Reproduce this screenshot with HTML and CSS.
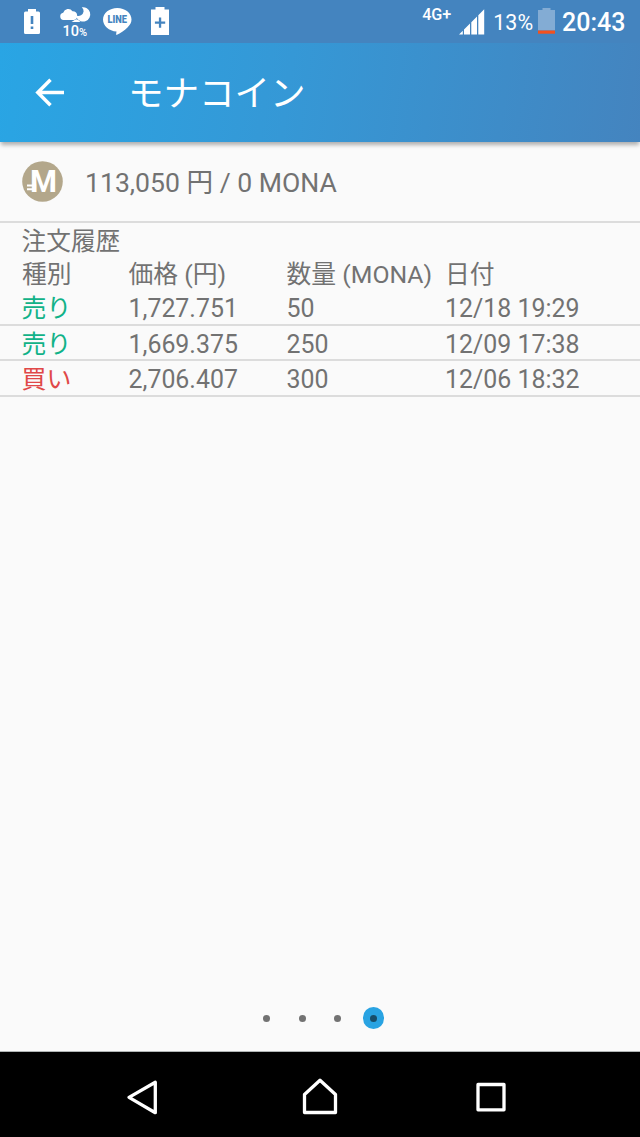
FILE: index.html
```html
<!DOCTYPE html>
<html lang="ja">
<head>
    <meta charset="UTF-8">
    <meta name="viewport" content="width=device-width, initial-scale=1.0">
    <title>モナコイン</title>
    <link rel="stylesheet" href="styles.css">
</head>
<body>
    <!-- ステータスバー -->
    <div class="status-bar">
        <svg class="status-icons" width="200" height="43" viewBox="0 0 200 43">
            <path fill="#fff" d="M28 9h8v2.500h2.500q1.500 0 1.500 1.500v19.500q0 1.500-1.500 1.500h-13q-1.500 0-1.500-1.500V13q0-1.500 1.500-1.500H28z"/>
            <path fill="#4484bf" d="M30.700 16h2.600v8h-2.600zM30.700 26.500h2.600v2.600h-2.600z"/>
            <path fill="#fff" d="M63.500 20a3.700 3.700 0 0 1-.3-7.300 5.300 5.300 0 0 1 9.300-1.500 4.500 4.500 0 0 1 1.500 8.800z"/>
            <path fill="#fff" d="M81.800 7.300A7.200 7.200 0 1 1 76.800 18L76.500 15.800A5.400 5.400 0 0 0 83.600 11.600Q83.800 9 81.800 7.300z"/>
            <path fill="#fff" d="M71.500 22l3.200-1.900 1.800-.9 1.800.9 2.200 1.900z"/>
            <text class="rain" x="62.500" y="35.700">10<tspan class="rain-unit">%</tspan></text>
            <path fill="#fff" d="M117.300 8c7.800 0 14.200 5.100 14.200 11.500 0 3-1.500 5.500-4 8-3 3-7.500 6-10.500 7.300-.8.300-1-.2-.8-1l.3-2.300c-7.500-.4-13.500-5.600-13.500-12C103 13.100 109.500 8 117.300 8z"/>
            <text class="line" x="107.500" y="23.200" textLength="19.500" lengthAdjust="spacingAndGlyphs">LINE</text>
            <path fill="#fff" d="M155.500 7h9v2.500h4.500V35h-18V9.500h4.500z"/>
            <path fill="#4484bf" d="M158.900 17.500h2.300v4h4v2.300h-4v4h-2.300v-4h-4v-2.300h4z"/>
        </svg>
        <div class="status-right">
            <span class="network">4G+</span>
            <svg class="signal" width="26" height="43" viewBox="0 0 26 43">
                <path fill="#fff" d="M0 34.500l3.800-3.800v3.800zM5 34.500v-5l6-6v11zM12.300 34.500V22.200l5.700-5.700v18zM19.300 34.500V15.200l5.900-5.900v25.200z"/>
            </svg>
            <span class="percent">13%</span>
            <svg class="battery" width="18" height="43" viewBox="0 0 18 43">
                <path fill="#83acd4" d="M4.500 8h8v2h4.500v20.500H0V10h4.500z"/>
                <path fill="#f4511e" d="M0 30.500h17v3.200H0z"/>
            </svg>
            <span class="clock">20:43</span>
        </div>
    </div>

    <!-- ヘッダー -->
    <div class="header">
        <svg class="back" width="30" height="30" viewBox="0 0 30 30">
            <path fill="none" stroke="#fff" stroke-width="3.500" d="M29 14.500H3M15.500 1.800L2.800 14.500l12.700 12.700"/>
        </svg>
        <h1>モナコイン</h1>
    </div>

    <!-- 残高 -->
    <div class="balance">
        <svg width="41" height="41" viewBox="0 0 41 41">
            <circle cx="20.500" cy="20.500" r="20.300" fill="#b3a78b"/>
            <text class="coin" x="8" y="31" textLength="27" lengthAdjust="spacingAndGlyphs">M</text>
            <path stroke="#fff" stroke-width="1.900" d="M5 24.500h8M5 28.200h8"/>
        </svg>
        <p>113,050 円 / 0 MONA</p>
    </div>

    <!-- 注文履歴 -->
    <div class="history">
        <h2>注文履歴</h2>
        <div class="row head">
            <span>種別</span><span>価格 (円)</span><span>数量 (MONA)</span><span>日付</span>
        </div>
        <div class="row">
            <span class="sell">売り</span><span>1,727.751</span><span>50</span><span>12/18 19:29</span>
        </div>
        <div class="row">
            <span class="sell">売り</span><span>1,669.375</span><span>250</span><span>12/09 17:38</span>
        </div>
        <div class="row">
            <span class="buy">買い</span><span>2,706.407</span><span>300</span><span>12/06 18:32</span>
        </div>
    </div>

    <!-- ページ位置 -->
    <div class="pager">
        <span class="dot"></span>
        <span class="dot"></span>
        <span class="dot"></span>
        <span class="dot active"></span>
    </div>

    <!-- ナビゲーションバー -->
    <div class="nav-bar">
        <svg width="50" height="40" viewBox="0 0 50 40">
            <path d="M38.300 5.300v30.400L12 20.400z"/>
        </svg>
        <svg width="36" height="40" viewBox="0 0 36 40">
            <path d="M18 3.200L33.500 17.500v18h-31v-18z"/>
        </svg>
        <svg width="50" height="40" viewBox="0 0 50 40">
            <path d="M12 7.500h26v25.300H12z"/>
        </svg>
    </div>
</body>
</html>
```

FILE: styles.css
```css
* {
    box-sizing: border-box;
}
body {
    display: flex;
    flex-direction: column;
    height: 1137px;
    margin: 0;
    background: #fafafa;
    color: #727272;
    font-family: Roboto, "Noto Sans CJK JP", sans-serif;
}
h1, h2, p {
    margin: 0;
    font-weight: 400;
}
svg {
    flex: none;
    display: block;
}
.status-bar {
    display: flex;
    justify-content: space-between;
    height: 43px;
    background: #4484bf;
    color: white;
}
.status-icons text {
    fill: white;
}
.status-icons .rain {
    font-size: 14.5px;
    font-weight: 500;
}
.status-icons .rain-unit {
    font-size: 11px;
}
.status-icons .line {
    fill: #4484bf;
    font-size: 10px;
    font-weight: 900;
}
.status-right {
    display: flex;
    padding-right: 14.5px;
    line-height: 45px;
}
.network {
    font-size: 16.2px;
    font-weight: 500;
    line-height: 29px;
    margin-right: 8px;
}
.percent {
    margin-left: 8px;
    font-size: 21.4px;
    line-height: 45px;
}
.battery {
    margin-left: 5px;
}
.clock {
    margin-left: 6px;
    font-size: 25px;
    font-weight: 500;
}
.header {
    display: flex;
    align-items: center;
    height: 99px;
    padding-left: 35px;
    background: linear-gradient(98deg, #29a5e4, #3598d6 45%, #4484bf);
    box-shadow: 0 4px 4px -1px rgba(0, 0, 0, 0.3);
    color: white;
}
.header h1 {
    margin-left: 63px;
    margin-top: -4px;
    font-size: 35.5px;
}
.balance {
    display: flex;
    align-items: center;
    height: 81px;
    padding-left: 22px;
    border-bottom: 2px solid #dcdcdc;
}
.balance p {
    margin-left: 22px;
    padding-top: 2px;
    font-size: 26.6px;
    line-height: 40px;
}
.coin {
    fill: white;
    font-size: 31px;
    font-weight: 700;
}
.history h2 {
    height: 34px;
    padding-left: 21.500px;
    font-size: 24.7px;
    line-height: 37px;
}
.row {
    display: grid;
    grid-template-columns: 106.500px 158px 158.500px 1fr;
    height: 35.600px;
    padding-left: 22px;
    border-bottom: 2px solid #dcdcdc;
    font-size: 24.9px;
    line-height: 37px;
    white-space: nowrap;
}
.row.head {
    height: 33px;
    border-bottom: none;
    font-size: 24.8px;
    line-height: 35px;
}
.sell {
    color: #11b288;
}
.buy {
    color: #e04848;
}
.sell, .buy {
    margin-left: -0.5px;
}
.pager {
    display: flex;
    justify-content: center;
    align-items: center;
    gap: 14px;
    height: 22px;
    margin-top: auto;
    margin-bottom: 22px;
}
.dot {
    display: flex;
    justify-content: center;
    align-items: center;
    width: 21.500px;
    height: 21.500px;
    border-radius: 50%;
}
.dot::before {
    content: "";
    width: 7px;
    height: 7px;
    border-radius: 50%;
    background: #727272;
}
.dot.active {
    background: #29a3e2;
}
.dot.active::before {
    background: #174d69;
}
.nav-bar {
    display: flex;
    justify-content: center;
    align-items: center;
    gap: 128px;
    height: 86px;
    padding-top: 5px;
    border-top: 1px solid #b0b5b5;
    background: black;
}
.nav-bar svg:first-child {
    margin-left: -7px;
}
.nav-bar svg:first-child + svg {
    margin-left: 7px;
}
.nav-bar path {
    fill: none;
    stroke: white;
    stroke-width: 3.3;
    stroke-linejoin: round;
}
```
